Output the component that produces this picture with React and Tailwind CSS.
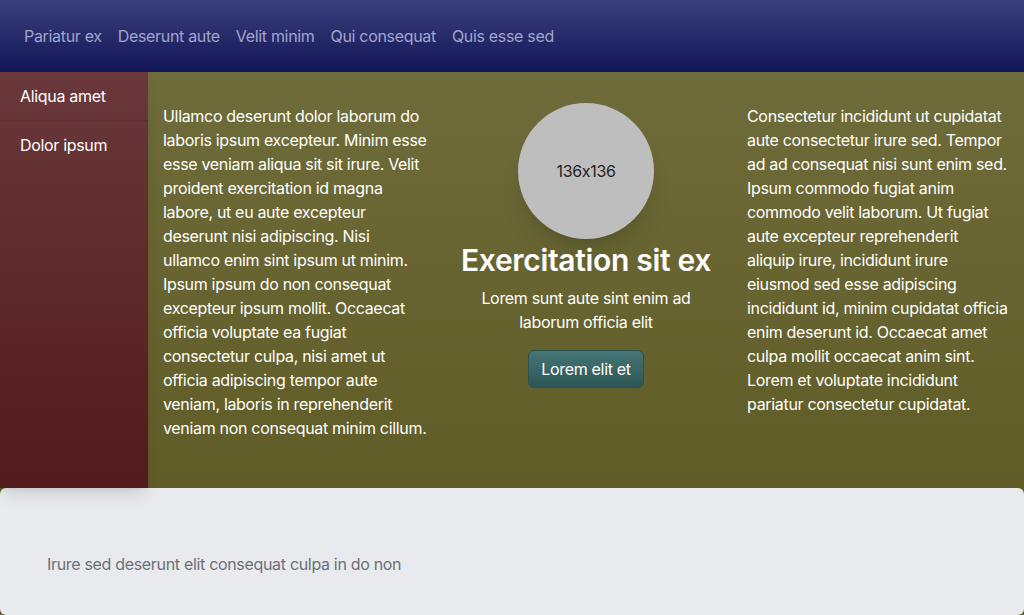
export default function App() {
    const navLinks = ["Pariatur ex", "Deserunt aute", "Velit minim", "Qui consequat", "Quis esse sed"];
    const sideLinks = ["Aliqua amet", "Dolor ipsum"];

    return (
        <div className="min-h-[615px] bg-[#5f5c28] font-['Inter','Liberation_Sans',sans-serif] tracking-[-0.02em] [font-feature-settings:'calt'_0] text-base">
            <header className="h-[72px] flex items-center gap-4 px-6 bg-gradient-to-b from-[#3c3e7b] to-[#131658]">
                {navLinks.map((link) => (
                    <a key={link} href="#" className="text-[#a2a4cc] leading-6">
                        {link}
                    </a>
                ))}
            </header>

            <div className="flex">
                <aside className="relative z-10 w-[148px] shrink-0 bg-gradient-to-b from-[#6a383b] to-[#521a1c] shadow-lg">
                    {sideLinks.map((link) => (
                        <div key={link} className="px-5 py-3 leading-6 text-white border-b border-[#5f2f32]">
                            {link}
                        </div>
                    ))}
                </aside>

                <main className="flex-1 h-[416px] bg-gradient-to-b from-[#6f6c3b] to-[#5f5c27] px-[15px] pt-8 grid grid-cols-3 gap-[30px] text-white leading-6">
                    <p className="-mr-[4px]">
                        Ullamco deserunt dolor laborum do laboris ipsum excepteur. Minim esse esse veniam aliqua sit sit irure. Velit proident exercitation id magna labore, ut eu aute excepteur deserunt nisi adipiscing. Nisi ullamco enim sint ipsum ut minim. Ipsum ipsum do non consequat excepteur ipsum mollit. Occaecat officia voluptate ea fugiat consectetur culpa, nisi amet ut officia adipiscing tempor aute veniam, laboris in reprehenderit veniam non consequat minim cillum.
                    </p>

                    <div className="flex flex-col items-center text-center">
                        <div className="w-[136px] h-[136px] rounded-full bg-[#bebebe] shadow-xl flex items-center justify-center text-[#222] text-base -mt-px">
                            136x136
                        </div>
                        <h1 className="mt-[3px] text-[30px] leading-9 font-semibold">Exercitation sit ex</h1>
                        <p className="mt-2">Lorem sunt aute sint enim ad laborum officia elit</p>
                        <button className="mt-4 px-3 py-1.5 rounded-md border border-[#2b5151] bg-gradient-to-b from-[#467575] to-[#2c5656] text-white leading-6">
                            Lorem elit et
                        </button>
                    </div>

                    <p>
                        Consectetur incididunt ut cupidatat aute consectetur irure sed. Tempor ad ad consequat nisi sunt enim sed. Ipsum commodo fugiat anim commodo velit laborum. Ut fugiat aute excepteur reprehenderit aliquip irure, incididunt irure eiusmod sed esse adipiscing incididunt id, minim cupidatat officia enim deserunt id. Occaecat amet culpa mollit occaecat anim sint. Lorem et voluptate incididunt pariatur consectetur cupidatat.
                    </p>
                </main>
            </div>

            <footer className="h-[127px] rounded-md bg-[#e9eaee] px-[47px] pt-16 text-[#6b7079] leading-6">
                Irure sed deserunt elit consequat culpa in do non
            </footer>
        </div>
    );
}
